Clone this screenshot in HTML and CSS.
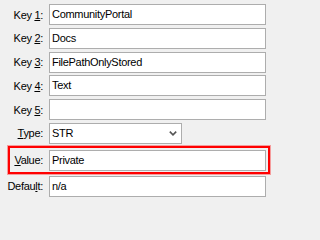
FILE: index.html
```html
<!DOCTYPE html>
<html>
<head>
<meta charset="utf-8">
<link rel="stylesheet" href="styles.css">
</head>
<body>
<div class="form">
  <div class="row"><span class="lbl">Key <u>1</u>:</span><div class="field">CommunityPortal</div></div>
  <div class="row"><span class="lbl">Key <u>2</u>:</span><div class="field">Docs</div></div>
  <div class="row"><span class="lbl">Key <u>3</u>:</span><div class="field">FilePathOnlyStored</div></div>
  <div class="row"><span class="lbl">Key <u>4</u>:</span><div class="field">Text</div></div>
  <div class="row"><span class="lbl">Key <u>5</u>:</span><div class="field"></div></div>
  <div class="row"><span class="lbl"><u>T</u>ype:</span><div class="field select"><span>STR</span><svg class="chev" width="8" height="5" viewBox="0 0 8 5"><polyline points="0.8,0.6 4,3.8 7.2,0.6" fill="none" stroke="#555" stroke-width="1.6"/></svg></div></div>
  <div class="row row-value"><span class="lbl"><u>V</u>alue:</span><div class="field">Private</div></div>
  <div class="row row-default"><span class="lbl">Defau<u>l</u>t:</span><div class="field">n/a</div></div>
</div>
</body>
</html>
```
FILE: styles.css
```css
html, body {
  margin: 0;
  background: #f0f0f0;
}
body {
  font-family: "Liberation Sans", Arial, sans-serif;
  font-size: 11px;
  letter-spacing: -0.3px;
  color: #000;
}
.form {
  box-sizing: border-box;
  width: 271px;
  height: 202px;
  overflow: hidden;
  display: flex;
  flex-direction: column;
  gap: 2.8px;
  padding: 4px 5px 0 4px;
}
.row {
  display: grid;
  grid-template-columns: 39px 1fr;
  column-gap: 6px;
  align-items: center;
  height: 21px;
  flex-shrink: 0;
}
.lbl {
  text-align: right;
  white-space: nowrap;
}
.lbl u {
  text-underline-offset: 1px;
}
.field {
  box-sizing: border-box;
  height: 21px;
  border: 1px solid #adadad;
  background: #fff;
  padding: 0 2px;
  line-height: 19px;
  white-space: nowrap;
  overflow: hidden;
}
.select {
  width: 133px;
  display: flex;
  justify-content: space-between;
  align-items: center;
  padding-right: 4px;
}
.chev {
  display: block;
}
.row-value {
  margin-top: 3.2px;
  position: relative;
}
.row-value::before {
  content: "";
  position: absolute;
  left: 4px;
  right: -4px;
  top: -4px;
  bottom: -3px;
  border: 2px solid #ff0000;
  box-shadow: 0 0 0 1px rgba(255, 0, 0, 0.35);
  pointer-events: none;
}
.row-default {
  margin-top: 2.2px;
}
```
